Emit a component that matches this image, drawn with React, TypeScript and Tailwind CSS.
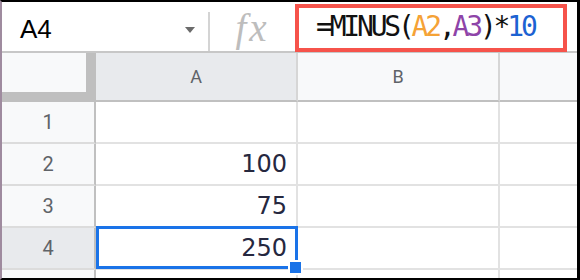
const rows = [
  { n: '1', v: '' },
  { n: '2', v: '100' },
  { n: '3', v: '75' },
  { n: '4', v: '250', active: true },
  { n: '5', v: '' },
]

function RowHeader({ n, active, last }: { n: string; active?: boolean; last?: boolean }) {
  return (
    <div
      className={`flex items-center justify-center border-r-2 border-r-[#c0c0c0] font-['Roboto',sans-serif] text-[20px] text-[#5f6368] ${
        last ? 'h-[8px]' : 'h-[42px] border-b-2 border-b-[#dcdcdc]'
      } ${active ? 'bg-[#e8eaed]' : 'bg-[#f8f9fa]'}`}
    >
      {!last && n}
    </div>
  )
}

function Cell({ v, last, edge }: { v?: string; last?: boolean; edge?: boolean }) {
  return (
    <div
      className={`flex items-center justify-end bg-white pr-[9px] font-['DejaVu_Sans',sans-serif] text-[24px] text-[#26283f] ${
        last ? 'h-[8px]' : 'h-[42px] border-b-2 border-b-[#e2e2e2]'
      } ${edge ? '' : 'border-r-2 border-r-[#e2e2e2]'}`}
    >
      {!last && v}
    </div>
  )
}

export default function App() {
  return (
    <div className="flex h-[280px] w-[580px] flex-col overflow-hidden border-t-2 border-b-2 border-l-2 border-r-[3px] border-t-black border-b-black border-r-black border-l-[#9f8b9f] bg-white">
      {/* formula bar */}
      <div className="flex h-[51px] shrink-0 border-b-2 border-[#c7c7c7]">
        <div className="flex w-[206px] items-center pl-[18px] pr-[13px] pt-[6px]">
          <span className="flex-1 font-['Liberation_Sans',sans-serif] text-[26px] text-black">A4</span>
          <svg width="10" height="6" viewBox="0 0 10 6">
            <path d="M0 0h10L5 6z" fill="#6b6b6b" />
          </svg>
        </div>
        <div className="mt-[10px] w-[2px] bg-[#d4d4d4]" />
        <div className="flex w-[85px] items-center justify-center pt-[3px]">
          <span className="font-['Liberation_Serif',serif] text-[39px] italic tracking-[3px] text-[#bdbdbd]">fx</span>
        </div>
        <div className="relative flex flex-1 items-center pl-[21px]">
          <div className="absolute left-0 top-[2px] h-[48px] w-[272px] border-4 border-[#f6534b]" />
          <span className="font-['DejaVu_Sans_Mono',monospace] text-[28px] tracking-[-3.2px] text-[#111]">
            =MINUS(<span className="text-[#f5a236]">A2</span>,<span className="text-[#8e44a8]">A3</span>)*
            <span className="text-[#1c62d2]">10</span>
          </span>
        </div>
      </div>

      {/* sheet */}
      <div className="relative grid flex-1 grid-cols-[94px_202px_202px_1fr]">
        <div className="h-[49px] border-b-[10px] border-r-[10px] border-[#bfbfbf] bg-[#f8f9fa]" />
        <div className="flex h-[49px] items-center justify-center border-b-2 border-r-2 border-b-[#c0c0c0] border-r-[#d6d6d6] bg-[#e8eaed] font-['Roboto',sans-serif] text-[18px] text-[#5f6368]">
          A
        </div>
        <div className="flex h-[49px] items-center justify-center border-b-2 border-r-2 border-b-[#c0c0c0] border-r-[#d6d6d6] bg-[#f8f9fa] font-['Roboto',sans-serif] text-[18px] text-[#5f6368]">
          B
        </div>
        <div className="h-[49px] border-b-2 border-b-[#c0c0c0] bg-[#f8f9fa]" />

        {rows.map((r, i) => {
          const last = i === rows.length - 1
          return [
            <RowHeader key={r.n + 'h'} n={r.n} active={r.active} last={last} />,
            <Cell key={r.n + 'a'} v={r.v} last={last} />,
            <Cell key={r.n + 'b'} last={last} />,
            <Cell key={r.n + 'c'} last={last} edge />,
          ]
        })}

        {/* selection A4 */}
        <div className="absolute left-[94px] top-[173px] h-[43px] w-[202px] border-[3px] border-[#1a73e8]" />
        <div className="absolute left-[286px] top-[207px] h-[15px] w-[15px] border-2 border-white bg-[#1a73e8]" />
      </div>
    </div>
  )
}
